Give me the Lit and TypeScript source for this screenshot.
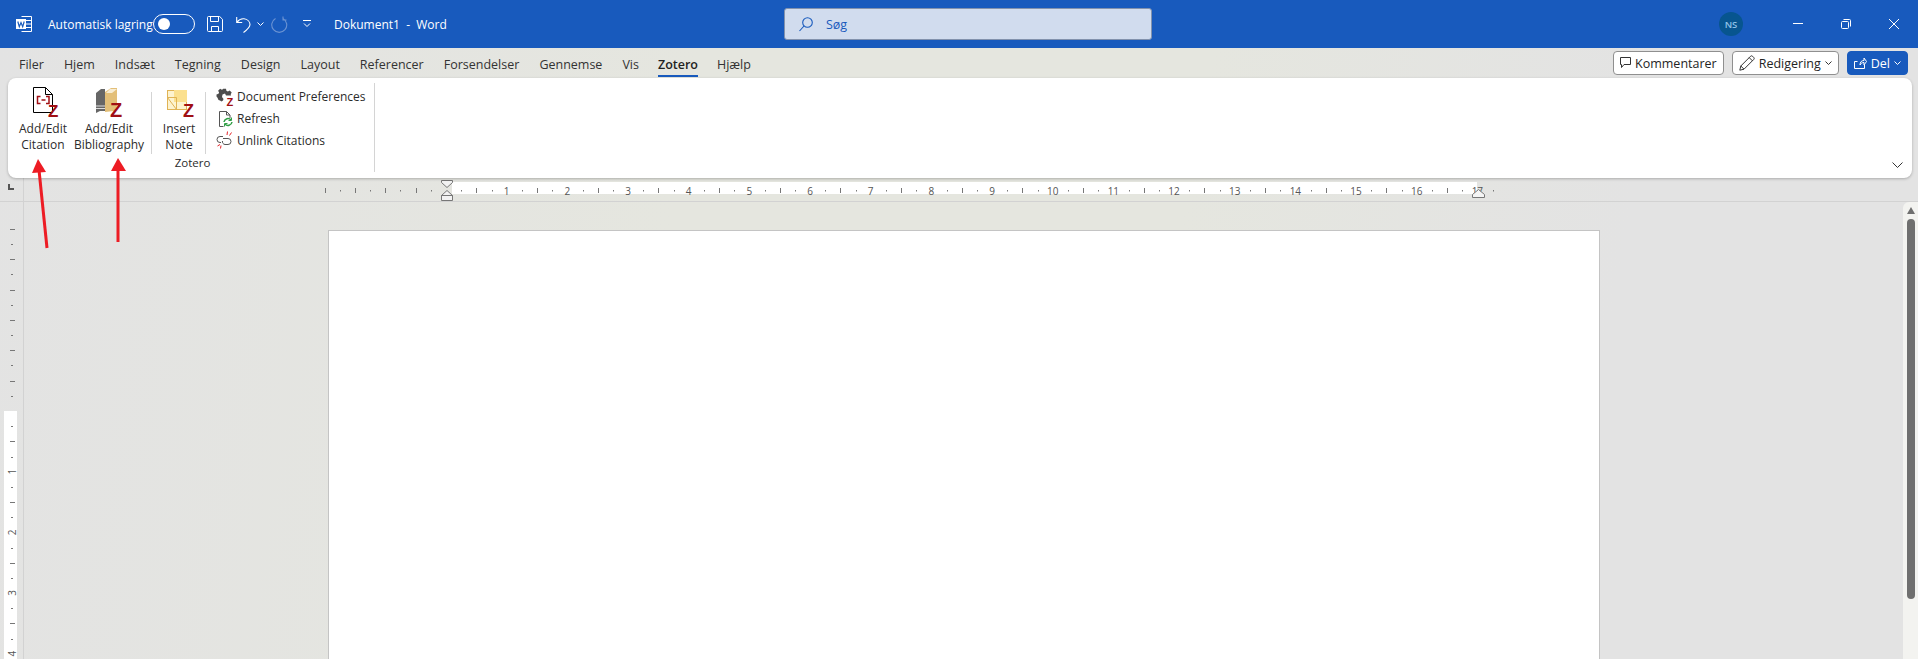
import { LitElement, html, css, svg } from "lit";
import { customElement } from "lit/decorators.js";

const TABS = ["Filer", "Hjem", "Indsæt", "Tegning", "Design", "Layout", "Referencer", "Forsendelser", "Gennemse", "Vis", "Zotero", "Hjælp"];
const CM = 60.67;

const zMark = (x: number, y: number, size: number) =>
  svg`<text x=${x} y=${y} font-size=${size} font-weight="700" font-family="Liberation Sans, sans-serif" fill="#a00f14">Z</text>`;

// horizontal ruler, ticks are in quarter cm from the left margin
const hRuler = () => {
  const zero = 446;
  const marks = [];
  for (let i = -8; i <= 69; i++) {
    if (i === 0) continue;
    const x = zero + (i * CM) / 4;
    if (i % 4 === 0 && i > 0) {
      marks.push(svg`<text x=${x} y="13" text-anchor="middle" font-size="10" font-family="Open Sans, sans-serif" fill="#555">${i / 4}</text>`);
    } else if (i % 2 === 0) {
      marks.push(svg`<rect x=${Math.round(x)} y="6" width="1" height="5" fill="#777"></rect>`);
    } else {
      marks.push(svg`<rect x=${Math.round(x)} y="8" width="1" height="1.5" fill="#777"></rect>`);
    }
  }
  return marks;
};

// vertical ruler, same idea, y is relative to top of the document area
const vRuler = () => {
  const zero = 411 - 202;
  const marks = [];
  for (let i = -12; i <= 16; i++) {
    if (i === 0) continue;
    const y = zero + (i * CM) / 4;
    if (i % 4 === 0 && i > 0) {
      marks.push(svg`<text transform="translate(16 ${y}) rotate(-90)" text-anchor="middle" font-size="10" font-family="Open Sans, sans-serif" fill="#555">${i / 4}</text>`);
    } else if (i % 2 === 0) {
      marks.push(svg`<rect x="10" y=${Math.round(y)} width="5" height="1" fill="#777"></rect>`);
    } else {
      marks.push(svg`<rect x="11" y=${Math.round(y)} width="2" height="1" fill="#777"></rect>`);
    }
  }
  return marks;
};

@customElement("app-root")
class AppRoot extends LitElement {
  static styles = css`
    :host {
      display: block;
      position: relative;
      width: 1918px;
      height: 659px;
      overflow: hidden;
      font-family: "Open Sans", "Noto Sans", sans-serif;
      color: #2b2b2b;
      background: linear-gradient(100deg, #e3e3e3 0%, #e5e6df 35%, #e5e6df 60%, #e3e3e3 82%);
    }

    * {
      box-sizing: border-box;
    }

    svg {
      display: block;
      flex: none;
    }

    .titlebar {
      display: flex;
      align-items: center;
      height: 48px;
      background: #185abd;
      color: #fff;
      padding-left: 16px;
      position: relative;
    }

    .autosave {
      font-size: 12px;
      margin-left: 16px;
      width: 105px;
      white-space: nowrap;
    }

    .toggle {
      width: 42px;
      height: 20px;
      border: 1px solid #fff;
      border-radius: 10px;
      padding: 3px;
    }

    .toggle i {
      display: block;
      width: 12px;
      height: 12px;
      margin-left: 1px;
      border-radius: 50%;
      background: #fff;
    }

    .save {
      margin-left: 12px;
    }

    .undo {
      margin-left: 13px;
    }

    .undo-caret {
      margin-left: 5px;
    }

    .redo {
      margin-left: 7px;
    }

    .custom {
      margin-left: 15px;
    }

    .doc-title {
      margin-left: 23px;
      font-size: 12px;
      white-space: pre;
    }

    .search {
      position: absolute;
      left: 784px;
      top: 8px;
      width: 368px;
      height: 32px;
      display: flex;
      align-items: center;
      gap: 13px;
      padding-left: 14px;
      background: #d1dcee;
      border: 1px solid #8292ad;
      border-radius: 3px;
      color: #185abd;
      font-size: 12.5px;
    }

    .win {
      margin-left: auto;
      display: flex;
      align-items: center;
    }

    .avatar {
      width: 24px;
      height: 24px;
      border-radius: 50%;
      background: #07558f;
      color: #8fc3e8;
      font-size: 9.5px;
      font-weight: 600;
      display: flex;
      align-items: center;
      justify-content: center;
      margin-right: 31px;
    }

    .win-btn {
      width: 48px;
      display: flex;
      justify-content: center;
    }

    .tabrow {
      display: flex;
      align-items: center;
      height: 30px;
      padding: 3px 10px 0 9px;
    }

    .tab {
      position: relative;
      font-size: 12.5px;
      padding: 0 10px;
      line-height: 24px;
      color: #333;
    }

    .tab.active {
      font-weight: 600;
      color: #222;
      padding: 0 9px;
    }

    .tab.active::after {
      content: "";
      position: absolute;
      left: 9px;
      right: 9px;
      bottom: 0;
      height: 2px;
      background: #185abd;
    }

    .actions {
      margin-left: auto;
      display: flex;
      gap: 8px;
      margin-top: -3px;
    }

    .pill {
      height: 24px;
      display: flex;
      align-items: center;
      gap: 4px;
      padding: 0 6px;
      background: #fff;
      border: 1px solid #8f8f8f;
      border-radius: 4px;
      font-size: 12.5px;
      color: #242424;
    }

    .pill.primary {
      background: #185abd;
      border-color: #185abd;
      color: #fff;
    }

    .ribbon {
      position: relative;
      z-index: 2;
      height: 100px;
      margin: 0 6px 0 8px;
      padding-left: 3px;
      background: #fff;
      border-radius: 8px;
      box-shadow: 0 1px 3px rgba(0, 0, 0, 0.25);
      display: flex;
      align-items: stretch;
    }

    .group {
      width: 364px;
      padding: 8px 0 2px;
      margin-bottom: 6px;
      margin-top: 5px;
      border-right: 1px solid #d4d4d4;
      display: flex;
      flex-direction: column;
    }

    .group-body {
      display: flex;
      height: 65px;
      margin-top: -5px;
    }

    .group-label {
      margin-top: auto;
      text-align: center;
      font-size: 11.5px;
      line-height: 14px;
    }

    .big {
      display: flex;
      flex-direction: column;
      align-items: center;
      font-size: 12px;
      line-height: 16px;
      text-align: center;
      white-space: nowrap;
    }

    .big svg {
      margin-bottom: 3px;
    }

    .sep {
      width: 1px;
      height: 62px;
      margin-top: 6px;
      background: #d4d4d4;
    }

    .small-list {
      display: flex;
      flex-direction: column;
      margin-left: 10px;
      margin-top: 0;
    }

    .small {
      display: flex;
      align-items: center;
      gap: 3px;
      height: 26px;
      font-size: 12px;
      white-space: nowrap;
    }

    .collapse {
      position: absolute;
      right: 9px;
      bottom: 10px;
    }

    .ruler-row {
      position: relative;
      height: 24px;
      border-bottom: 1px solid #d2d2d2;
      display: flex;
    }

    .corner {
      position: absolute;
      left: 8px;
      top: 6px;
      width: 6px;
      height: 6px;
      border-left: 2px solid #555;
      border-bottom: 2px solid #555;
    }

    .ruler-row .corner-line {
      width: 24px;
      border-right: 1px solid #d2d2d2;
    }

    .h-ruler {
      position: absolute;
      left: 0;
      top: 4px;
    }

    .h-white {
      position: absolute;
      left: 452px;
      top: 4px;
      width: 1025px;
      height: 12px;
      background: #fff;
    }

    .doc {
      display: flex;
      height: 457px;
    }

    .v-bar {
      position: relative;
      width: 24px;
      flex: none;
      border-right: 1px solid #d2d2d2;
    }

    .v-white {
      position: absolute;
      left: 4px;
      top: 209px;
      bottom: 0;
      width: 13px;
      background: #fff;
    }

    .v-ruler {
      position: absolute;
      left: 0;
      top: 0;
    }

    .canvas {
      flex: 1;
      padding: 28px 0 0 304px;
      overflow: hidden;
    }

    .page {
      width: 1272px;
      height: 600px;
      background: #fff;
      border: 1px solid #c4c4c4;
    }

    .scroll {
      width: 15px;
      flex: none;
      background: #f3f3f0;
      border-radius: 6px 0 0 0;
      padding: 5px 0 0 4px;
    }

    .scroll .thumb {
      width: 8px;
      height: 380px;
      margin-top: 5px;
      background: #6f6f6f;
      border-radius: 4px;
    }

    .arrows {
      position: absolute;
      left: 0;
      top: 0;
      z-index: 5;
      pointer-events: none;
    }
  `;

  render() {
    return html`
      <div class="titlebar">
        <svg width="16" height="16" viewBox="0 0 16 16" fill="none" stroke="#fff">
          <path d="M5.5.5h10v15h-10M9 4.5h6.500M9 8h6.500M9 11.500h6.500"></path>
          <rect x="0" y="3" width="10" height="10" fill="#fff" stroke="none"></rect>
          <path d="M1.800 5.500l1.500 5.200 1.700-4.200 1.700 4.200 1.500-5.200" stroke="#185abd" stroke-width="1.200"></path>
        </svg>
        <span class="autosave">Automatisk lagring</span>
        <span class="toggle"><i></i></span>
        <svg class="save" width="16" height="16" viewBox="0 0 16 16" fill="none" stroke="#fff">
          <path d="M.5 1.500a1 1 0 011-1h11.200l2.800 2.800v11.200a1 1 0 01-1 1h-13a1 1 0 01-1-1zM3.500.5v5h8v-5M4.500 15.500v-5h7v5"></path>
        </svg>
        <svg class="undo" width="16" height="17" viewBox="0 0 16 17" fill="none" stroke="#fff" stroke-width="1.100">
          <path d="M.7 1v5.500h5.500M.9 6.300C3 3.500 5.500 2.500 8 2.800c3.500.5 6 3 6 5.700 0 2.200-1.200 4-6.500 8"></path>
        </svg>
        <svg class="undo-caret" width="7" height="4" viewBox="0 0 7 4" fill="none" stroke="#fff"><path d="M.5.500l3 3 3-3"></path></svg>
        <svg class="redo" width="17" height="17" viewBox="0 0 17 17" fill="none" stroke="#6b93d3" stroke-width="1.100">
          <path d="M12 2.400a7.500 7.500 0 11-7.500 0M12 .5v3.500h3.500"></path>
        </svg>
        <svg class="custom" width="8" height="8" viewBox="0 0 8 8" fill="none" stroke="#fff"><path d="M0 .5h8M1 3.500l3 3 3-3"></path></svg>
        <span class="doc-title">Dokument1  -  Word</span>
        <div class="search">
          <svg width="14" height="15" viewBox="0 0 14 15" fill="none" stroke="#185abd" stroke-width="1.100">
            <circle cx="8.500" cy="5.500" r="4.800"></circle>
            <path d="M5 9L.5 14"></path>
          </svg>
          <span>Søg</span>
        </div>
        <div class="win">
          <span class="avatar">NS</span>
          <span class="win-btn"><svg width="10" height="10" viewBox="0 0 10 10" stroke="#fff"><path d="M0 4.500h10"></path></svg></span>
          <span class="win-btn"><svg width="10" height="10" viewBox="0 0 10 10" fill="none" stroke="#fff"><rect x=".5" y="2.500" width="7" height="7" rx="1"></rect><path d="M2.500.5h6a1 1 0 011 1v6"></path></svg></span>
          <span class="win-btn"><svg width="10" height="10" viewBox="0 0 10 10" stroke="#fff"><path d="M0 0l10 10M10 0L0 10"></path></svg></span>
        </div>
      </div>

      <div class="tabrow">
        ${TABS.map(t => html`<span class="tab ${t === "Zotero" ? "active" : ""}">${t}</span>`)}
        <div class="actions">
          <span class="pill">
            <svg width="11" height="12" viewBox="0 0 11 12" fill="none" stroke="#333"><path d="M.5.500h10v7H4L1.500 10.500v-3h-1z"></path></svg>
            Kommentarer
          </span>
          <span class="pill">
            <svg width="16" height="16" viewBox="0 0 16 16" fill="none" stroke="#333"><path d="M.8 15.200l1-4.200L11.500 1.300a1.500 1.500 0 012.100 0l1.100 1.100a1.500 1.500 0 010 2.100L5 14.200zM1.800 11L5 14.200M10.200 2.600l3.200 3.200"></path></svg>
            Redigering
            <svg width="7" height="4" viewBox="0 0 7 4" fill="none" stroke="#333"><path d="M.5.500l3 3 3-3"></path></svg>
          </span>
          <span class="pill primary">
            <svg width="13" height="12" viewBox="0 0 13 12" fill="none" stroke="#fff"><path d="M3.500 4.500H.5v7h10V8M6 8c0-3 1.500-4.500 4-4.500V1l2.500 3.500L10 8V5.500C8 5.500 7 6.500 6 8z"></path></svg>
            Del
            <svg width="7" height="4" viewBox="0 0 7 4" fill="none" stroke="#fff"><path d="M.5.500l3 3 3-3"></path></svg>
          </span>
        </div>
      </div>

      <div class="ribbon">
        <div class="group">
          <div class="group-body">
            <div class="big" style="width: 52px; margin-left: 6px">
              <svg width="32" height="32" viewBox="0 0 32 32" fill="none">
                <path d="M6.500 1.500h12l7 7v18h-19z" fill="#fff" stroke="#000"></path>
                <path d="M18.500 1.500v7h7" stroke="#000"></path>
                <path d="M13.500 10.500h-3v7h3M19 10.500h3v7h-3" stroke="#a00f14" stroke-width="1.500"></path>
                <path d="M14.500 14h4" stroke="#a00f14" stroke-width="1.500"></path>
                ${zMark(21, 31, 17)}
              </svg>
              Add/Edit<br />Citation
            </div>
            <div class="big" style="width: 74px; margin-left: 3px">
              <svg width="32" height="32" viewBox="0 0 32 32">
                <path d="M3 7l5-4h4v22H7l-4 2z" fill="#666"></path>
                <path d="M3 20h9M3 22.500h9" stroke="#ddd"></path>
                <path d="M12 6l6-4h6v18l-3 5-9 1z" fill="#e3bf78"></path>
                <path d="M17 3h7l-5 4h-6z" fill="#f7ecd2"></path>
                ${zMark(17, 31, 20)}
              </svg>
              Add/Edit<br />Bibliography
            </div>
            <div class="sep" style="margin-left: 5px"></div>
            <div class="big" style="width: 52px; margin-left: 1px">
              <svg width="32" height="32" viewBox="0 0 32 32" fill="none">
                <rect x="4.500" y="4.500" width="19" height="19" fill="#fdf3cf" stroke="#e0b355"></rect>
                <rect x="11" y="4" width="13" height="12" fill="#fbe08e"></rect>
                <path d="M4.500 11.500h9v12M4.500 11.500l9 12" stroke="#e0b355"></path>
                ${zMark(20, 31, 18)}
              </svg>
              Insert<br />Note
            </div>
            <div class="sep"></div>
            <div class="small-list">
              <div class="small">
                <svg width="18" height="18" viewBox="0 0 18 18">
                  <path d="M7 .8h3l.4 2 1.500.7 1.800-1 2 2-1 1.700.4 1.300H10l-1-2-2.500 1-.5 2.500 1.500 2-.5 1.500-1.500 1-1.500-1-1.500-.5-1-2.200L.5 8.500v-2l2-.7.600-1.300-1-1.800 2-2 1.800 1 1.300-.6z" fill="#4d4d4d"></path>
                  ${zMark(10.500, 17.500, 11)}
                </svg>
                Document Preferences
              </div>
              <div class="small">
                <svg width="18" height="18" viewBox="0 0 18 18" fill="none">
                  <path d="M3.500 16.500V1.500h7l3.500 3.500v3M3.500 16.500h4M10.500 1.500V5H14" stroke="#555"></path>
                  <path d="M8 12a4 4 0 017-2M16 12a4 4 0 01-7 2" stroke="#2f9e44" stroke-width="1.500"></path>
                  <path d="M15.500 7.500V10.500H12.500M8.500 16.500V13.500H11.500" stroke="#2f9e44"></path>
                </svg>
                Refresh
              </div>
              <div class="small">
                <svg width="18" height="18" viewBox="0 0 18 18" fill="none">
                  <path d="M7 5.500H4a2.800 2.800 0 000 6h1M7 7.500h5a2.800 2.800 0 010 6H9a2.800 2.800 0 01-2.500-3.500" stroke="#555"></path>
                  <path d="M11.500.5l-.5 3.500M15.500 1.500l-2 3M1.500 15l2.500-1.500M4.500 17.500l.5-3" stroke="#e2262b"></path>
                </svg>
                Unlink Citations
              </div>
            </div>
          </div>
          <div class="group-label">Zotero</div>
        </div>
        <svg class="collapse" width="11" height="6" viewBox="0 0 11 6" fill="none" stroke="#333"><path d="M.5.500l5 5 5-5"></path></svg>
      </div>

      <div class="ruler-row">
        <div class="corner-line"></div>
        <div class="corner"></div>
        <div class="h-white"></div>
        <svg class="h-ruler" width="1600" height="20">${hRuler()}</svg>
        <svg class="h-ruler" style="top: 0" width="1600" height="24" fill="none" stroke="#777">
          <path d="M441.500 2.500h11v2l-5.500 5-5.500-5zM441.500 17.500l5.500-5 5.500 5zM441.500 17.500h11v5h-11z" fill="#f2f2f2"></path>
          <path d="M1472.500 16.500l6-5 6 5v3h-12z" fill="#f5f5f5"></path>
        </svg>
      </div>

      <div class="doc">
        <div class="v-bar">
          <div class="v-white"></div>
          <svg class="v-ruler" width="24" height="457">${vRuler()}</svg>
        </div>
        <div class="canvas"><div class="page"></div></div>
        <div class="scroll">
          <svg width="8" height="7" viewBox="0 0 8 7"><path d="M4 0l4 7H0z" fill="#6f6f6f"></path></svg>
          <div class="thumb"></div>
        </div>
      </div>

      <svg class="arrows" width="200" height="260" fill="#ed1c24" stroke="#ed1c24">
        <path d="M38 159l8 13-14 1z" stroke="none"></path>
        <path d="M39 170l8 78" stroke-width="3"></path>
        <path d="M118 158l8 13h-15z" stroke="none"></path>
        <path d="M118 170v72" stroke-width="3"></path>
      </svg>
    `;
  }
}

export { AppRoot };
declare global {
  interface HTMLElementTagNameMap {
    "app-root": AppRoot;
  }
}
